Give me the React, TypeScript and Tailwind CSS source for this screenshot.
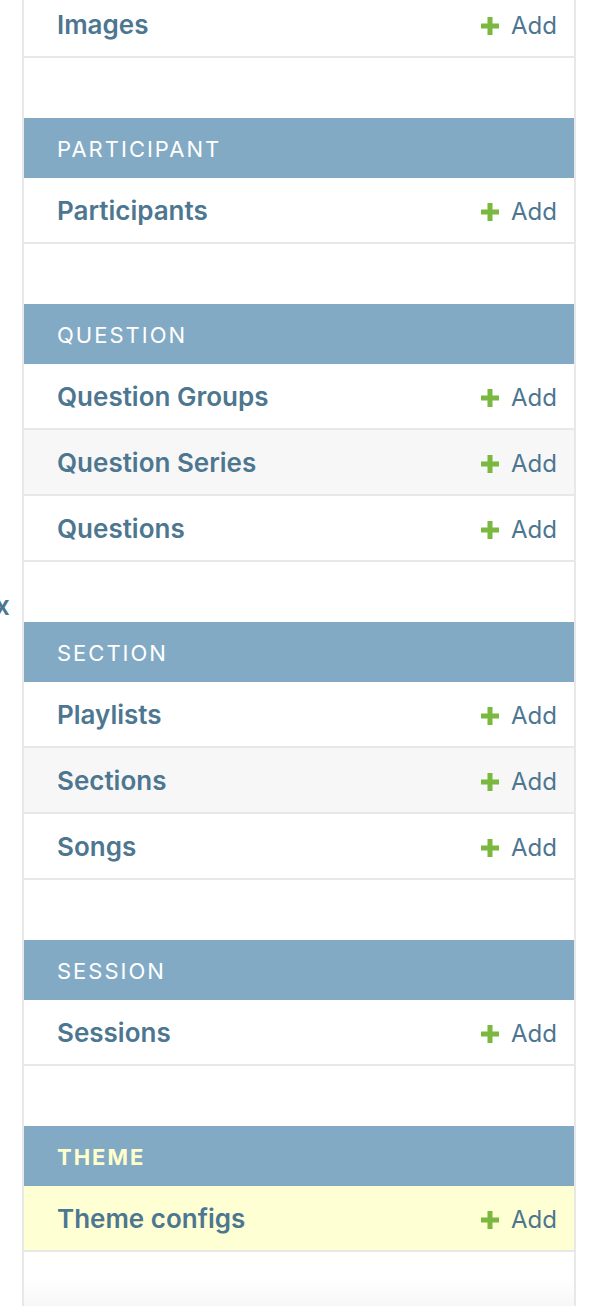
const sections = [
  { name: "", models: ["Images"] },
  { name: "Participant", models: ["Participants"] },
  { name: "Question", models: ["Question Groups", "Question Series", "Questions"] },
  { name: "Section", models: ["Playlists", "Sections", "Songs"] },
  { name: "Session", models: ["Sessions"] },
  { name: "Theme", models: ["Theme configs"], current: true },
];

function PlusIcon() {
  return (
    <svg width="18" height="18" viewBox="0 0 18 18" aria-hidden="true">
      <path d="M6.5 0h5v6.5H18v5h-6.5V18h-5v-6.5H0v-5h6.5z" fill="#7bb83f" />
    </svg>
  );
}

function ModelRow({ name, striped, current }: { name: string; striped: boolean; current?: boolean }) {
  const bg = current ? "bg-[#ffffd4]" : striped ? "bg-[#f7f7f7]" : "bg-white";
  return (
    <div className={`flex h-[66px] items-center border-b-2 border-[#e8e8e8] pl-[33px] pr-[17px] ${bg}`}>
      <a className="flex-1 text-[26px] font-semibold text-[#4d7690]">{name}</a>
      <a className="flex items-center gap-3 pt-1 text-[24px] text-[#4d7690]">
        <PlusIcon />
        Add
      </a>
    </div>
  );
}

export default function App() {
  return (
    <div className="flex h-[1306px] w-full overflow-hidden bg-white font-['Inter','Liberation_Sans',sans-serif]">
      <div className="relative w-[22px] shrink-0">
        <span className="absolute -left-[5px] top-[586px] text-[26px] font-semibold text-[#4d7690]">x</span>
      </div>
      <nav className="flex w-[554px] shrink-0 flex-col border-x-2 border-[#e8e8e8]">
        <div className="-mt-2 flex flex-col">
          {sections.map((s, i) => (
            <div key={i} className={i === 0 ? "" : "mt-[60px]"}>
              {s.name && (
                <div className="flex h-[60px] items-center bg-[#82aac4] pl-[33px] pt-0.5">
                  <span
                    className={`text-[22px] uppercase tracking-[2px] ${
                      s.current ? "font-bold text-[#ffffcc]" : "text-white"
                    }`}
                  >
                    {s.name}
                  </span>
                </div>
              )}
              {s.models.map((m, j) => (
                <ModelRow key={m} name={m} striped={j % 2 === 1} current={s.current} />
              ))}
            </div>
          ))}
        </div>
        <div className="flex-1 bg-gradient-to-b from-white via-white to-[#f7f7f7]" />
      </nav>
      <div className="flex-1" />
    </div>
  );
}
